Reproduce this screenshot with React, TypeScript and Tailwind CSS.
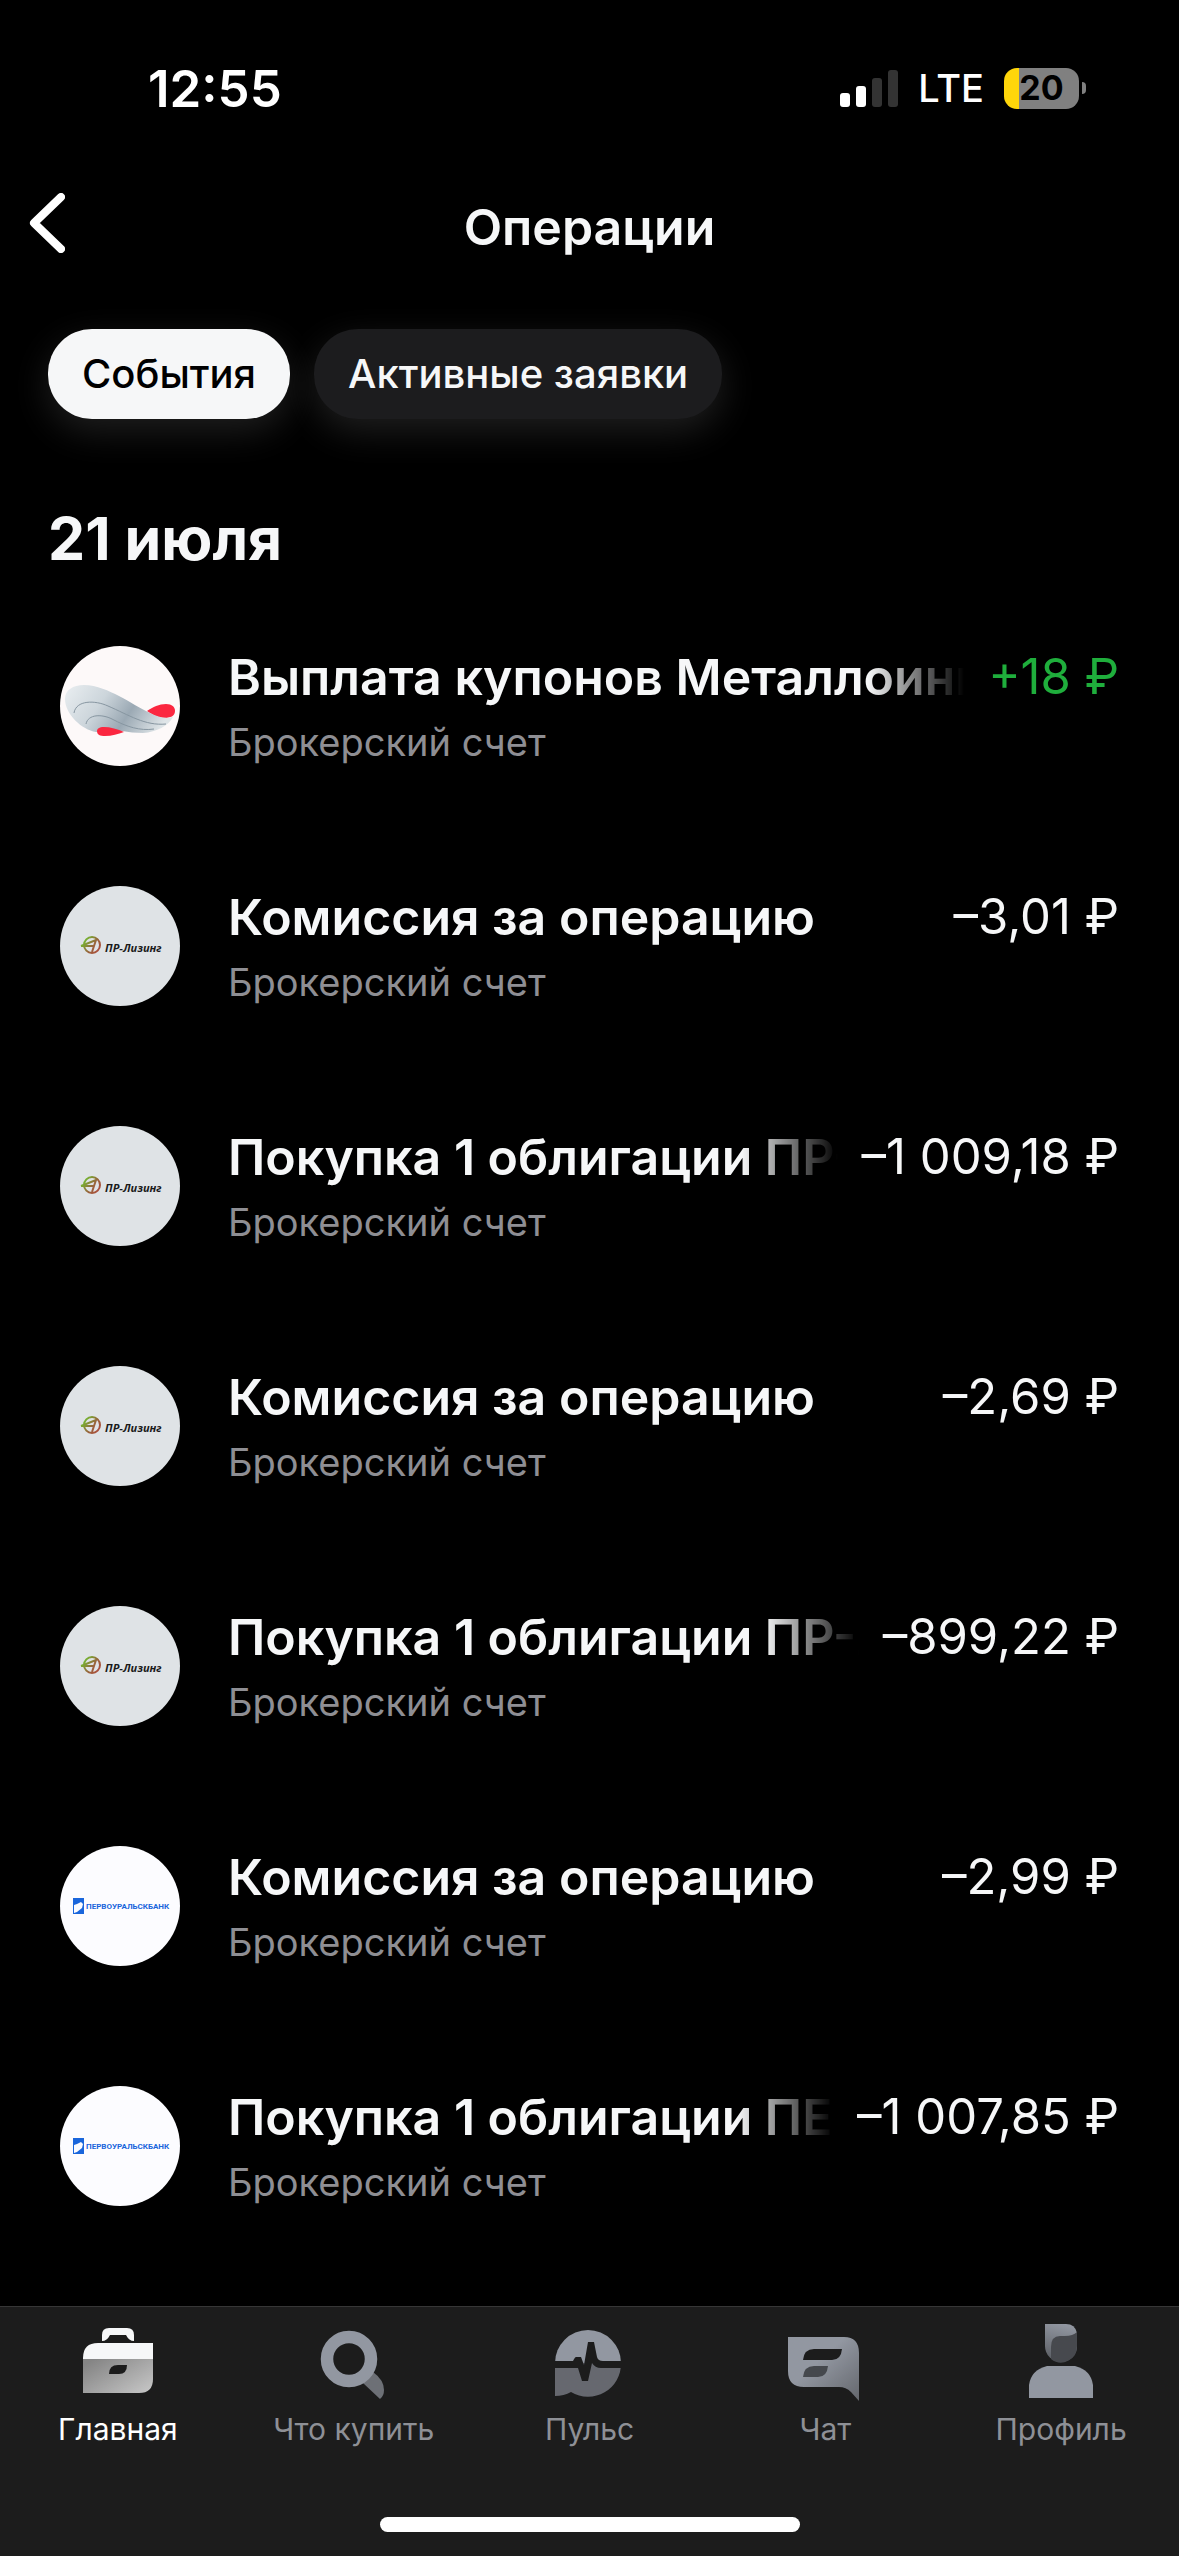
import { useState } from 'react'

type LogoKind = 'metal' | 'leasing' | 'bank'

interface Operation {
  title: string
  amount: string
  logo: LogoKind
  income?: boolean
}

const operations: Operation[] = [
  { title: 'Выплата купонов Металлоинвест', amount: '+18 ₽', logo: 'metal', income: true },
  { title: 'Комиссия за операцию', amount: '–3,01 ₽', logo: 'leasing' },
  { title: 'Покупка 1 облигации ПР-Лизинг', amount: '–1 009,18 ₽', logo: 'leasing' },
  { title: 'Комиссия за операцию', amount: '–2,69 ₽', logo: 'leasing' },
  { title: 'Покупка 1 облигации ПР-Лизинг', amount: '–899,22 ₽', logo: 'leasing' },
  { title: 'Комиссия за операцию', amount: '–2,99 ₽', logo: 'bank' },
  { title: 'Покупка 1 облигации ПЕРВОУРАЛЬСКБАНК', amount: '–1 007,85 ₽', logo: 'bank' },
]

export default function App() {
  return (
    <div className="flex min-h-screen flex-col bg-black font-['Inter',sans-serif] text-[#f6f7f8]">
      <StatusBar />
      <Header />
      <Filters />
      <main className="flex-1">
        <h2 className="px-12 pt-20 text-[59px] leading-20 font-bold">21 июля</h2>
        <ul className="pt-[67px]">
          {operations.map((operation, index) => (
            <OperationRow key={index} operation={operation} />
          ))}
        </ul>
      </main>
      <TabBar />
    </div>
  )
}

function StatusBar() {
  return (
    <div className="flex h-44 items-center justify-between pr-[93px] pl-[148px] text-white">
      <span className="text-[51px] leading-none font-semibold">12:55</span>
      <div className="flex items-center gap-5">
        <svg className="h-[37px] w-[58px]" viewBox="0 0 58 37">
          <rect x="0" y="23" width="10" height="14" rx="3" fill="#fff" />
          <rect x="16" y="16" width="10" height="21" rx="3" fill="#fff" />
          <rect x="32" y="8" width="10" height="29" rx="3" fill="#333" />
          <rect x="48" y="0" width="10" height="37" rx="3" fill="#333" />
        </svg>
        <span className="text-[38px] leading-none font-medium">LTE</span>
        <div className="flex items-center gap-[3px]">
          <div className="flex h-[41px] w-[75px] items-center justify-center rounded-[13px] bg-linear-to-r from-[#ffd60a] from-20% to-[#808080] to-20% text-[34px] leading-none font-bold text-black">
            20
          </div>
          <div className="h-3 w-1 rounded-r-full bg-[#808080]" />
        </div>
      </div>
    </div>
  )
}

function Header() {
  return (
    <header className="grid h-[102px] grid-cols-[1fr_auto_1fr] items-center px-[29px]">
      <button type="button" aria-label="Назад" className="w-9 pb-2">
        <svg className="h-[60px] w-9" viewBox="0 0 36 60" fill="none" stroke="#fff" strokeWidth="8" strokeLinecap="round" strokeLinejoin="round">
          <path d="M32 4 5 30l27 26" />
        </svg>
      </button>
      <h1 className="text-[50px] leading-none font-semibold">Операции</h1>
    </header>
  )
}

function Filters() {
  const [active, setActive] = useState('События')

  return (
    <div className="flex gap-6 px-12 pt-[51px]">
      {['События', 'Активные заявки'].map((name) => (
        <button
          key={name}
          type="button"
          aria-pressed={active === name}
          onClick={() => setActive(name)}
          className={
            active === name
              ? 'h-[90px] rounded-[44px] bg-[#f6f7f8] px-[34px] text-[40px] font-medium text-black shadow-[0_12px_36px_#ffffff1f]'
              : 'h-[90px] rounded-[44px] bg-[#1c1c1e] px-[34px] text-[40px] font-medium shadow-[0_12px_36px_#ffffff1f]'
          }
        >
          {name}
        </button>
      ))}
    </div>
  )
}

function OperationRow({ operation }: { operation: Operation }) {
  return (
    <li className="flex h-60 items-start gap-12 px-15 last:h-auto">
      <Logo kind={operation.logo} />
      <div className="min-w-0 flex-1">
        <div className="flex items-center gap-6 leading-[62px]">
          <span className="min-w-0 flex-1 overflow-hidden mask-r-from-[calc(100%-96px)] text-[50px] font-semibold whitespace-nowrap">
            {operation.title}
          </span>
          <span
            className={
              operation.income ? 'text-[49px] whitespace-nowrap text-[#1fae3c]' : 'text-[49px] whitespace-nowrap'
            }
          >
            {operation.amount}
          </span>
        </div>
        <p className="pt-[10px] text-[38px] leading-12 text-[#8e8e93]">Брокерский счет</p>
      </div>
    </li>
  )
}

function Logo({ kind }: { kind: LogoKind }) {
  if (kind === 'metal') {
    return (
      <svg className="size-30 shrink-0" viewBox="0 0 120 120">
        <defs>
          <linearGradient id="metal" x1="0" y1="0.2" x2="1" y2="0.5">
            <stop offset="0" stopColor="#e6ebee" />
            <stop offset="0.35" stopColor="#ccd5db" />
            <stop offset="0.65" stopColor="#9ba9b4" />
            <stop offset="1" stopColor="#dfe5e8" />
          </linearGradient>
        </defs>
        <circle cx="60" cy="60" r="60" fill="#fdf9f9" />
        <path d="M87 65c6-4 12-7 19-7 6 0 9 3 9 7 0 5-5 7-10 7-7 0-12-3-18-7z" fill="#fb2740" />
        <path d="M5 53c0-9 8-14 19-14 13 0 25 6 35 11 12 6 20 12 31 17 8 4 15 6 23 4-5 9-16 15-30 16-8 0-14-1-21-2l-26 1C22 84 5 68 5 53z" fill="url(#metal)" />
        <path d="M14 67c2-13 21-13 34-7 21 9 37 20 58 18M26 78c2-10 16-10 26-5 15 8 28 12 42 10" fill="none" stroke="#8796a1" />
        <path d="M64 86c-6-3-14-5-20-5-5 0-7 2-7 4 0 4 3 5 8 5 7 0 13-2 19-4z" fill="#fb2740" />
      </svg>
    )
  }

  if (kind === 'leasing') {
    return (
      <svg className="size-30 shrink-0" viewBox="0 0 120 120">
        <defs>
          <linearGradient id="leasing" gradientUnits="userSpaceOnUse" x1="22" y1="55" x2="40" y2="69">
            <stop offset="0" stopColor="#6fc230" />
            <stop offset="0.5" stopColor="#98653c" />
            <stop offset="1" stopColor="#b5443c" />
          </linearGradient>
        </defs>
        <circle cx="60" cy="60" r="60" fill="#dfe3e6" />
        <circle cx="32" cy="59" r="8" fill="none" stroke="url(#leasing)" strokeWidth="2" />
        <path d="m21 60 15-6-4 12M21 60h13" fill="none" stroke="url(#leasing)" strokeWidth="2" />
        <text x="45" y="66" fill="#1a1a1a" fontFamily="Open Sans" fontSize="11" fontStyle="italic" fontWeight="700">
          ПР-Лизинг
        </text>
      </svg>
    )
  }

  return (
    <svg className="size-30 shrink-0" viewBox="0 0 120 120">
      <circle cx="60" cy="60" r="60" fill="#fcfcff" />
      <rect x="13" y="52" width="11" height="16" fill="#1a66dc" />
      <path d="m14 59 3-1 4-2 2 2-1 4-5 4-3 1z" fill="#fcfcff" />
      <text x="26" y="63" fill="#1a66dc" fontFamily="Liberation Sans Narrow, Roboto" fontSize="8" fontWeight="700">
        ПЕРВОУРАЛЬСКБАНК
      </text>
    </svg>
  )
}

const tabs = [
  { name: 'Главная', icon: <BriefcaseIcon /> },
  { name: 'Что купить', icon: <SearchIcon /> },
  { name: 'Пульс', icon: <PulseIcon /> },
  { name: 'Чат', icon: <ChatIcon /> },
  { name: 'Профиль', icon: <ProfileIcon /> },
]

function TabBar() {
  return (
    <footer className="border-t border-[#363636] bg-[#1c1c1c] pt-3">
      <nav className="grid grid-cols-5">
        {tabs.map((tab, index) => (
          <a
            key={tab.name}
            href="#"
            className={
              index === 0
                ? 'flex flex-col items-center gap-2 text-[30px] leading-9 text-white'
                : 'flex flex-col items-center gap-2 text-[30px] leading-9 text-[#8e9096]'
            }
          >
            {tab.icon}
            {tab.name}
          </a>
        ))}
      </nav>
      <div className="mx-auto mt-[70px] mb-6 h-[15px] w-[420px] rounded-full bg-white" />
    </footer>
  )
}

function BriefcaseIcon() {
  return (
    <svg className="size-[84px]" viewBox="0 0 84 84">
      <defs>
        <linearGradient id="case" x1="0" y1="0.2" x2="1" y2="1">
          <stop offset="0" stopColor="#858585" />
          <stop offset="1" stopColor="#c8c8c8" />
        </linearGradient>
      </defs>
      <path d="M26 22v-6q0-7 7-7h18q7 0 7 7v6q-5 0-8-6H34q-3 6-8 6z" fill="#f6f7f8" />
      <path d="M7 41V39q0-15 15-15h55v17z" fill="#f6f7f8" />
      <path d="M7 40h70v20q0 14-14 14H7z" fill="url(#case)" />
      <path d="M33 55q0-9 9-9h9q0 9-8 9z" fill="#1c1c1c" />
    </svg>
  )
}

function SearchIcon() {
  return (
    <svg className="size-[84px]" viewBox="0 0 84 84">
      <path d="m51 64 10-11q11 8 11 18 0 6-4 9z" fill="#6d7076" />
      <circle cx="37" cy="40" r="22" fill="none" stroke="#9297a1" strokeWidth="12.5" />
    </svg>
  )
}

function PulseIcon() {
  return (
    <svg className="size-[84px]" viewBox="0 0 84 84">
      <path d="M8 44a33 33 0 0 1 66 0z" fill="#9297a1" />
      <path d="M8 44h66a33 33 0 0 1-50 29q-7 4-16 4z" fill="#66686f" />
      <path d="M7 42h19q2-4 3-4h5l3 8 4-23h6l3 15q1 4 6 4h20v7H54q-6 0-9-5l-4 18h-6l-4-13H7z" fill="#1c1c1c" />
    </svg>
  )
}

function ChatIcon() {
  return (
    <svg className="size-[84px]" viewBox="0 0 84 84">
      <defs>
        <linearGradient id="chat" x1="0.4" y1="0.4" x2="1" y2="1">
          <stop offset="0" stopColor="#9297a1" />
          <stop offset="1" stopColor="#64676d" />
        </linearGradient>
      </defs>
      <path d="M5 18h56q15 0 15 16v48l-8-9q-5-5-12-5H21Q5 68 5 52z" fill="url(#chat)" />
      <path d="M20 41q1-11 11-11h28q-1 11-10 11z" fill="#1c1c1c" />
      <path d="M20 58q1-11 11-11h14q-1 11-10 11z" fill="#45484d" />
    </svg>
  )
}

function ProfileIcon() {
  return (
    <svg className="size-[84px]" viewBox="0 0 84 84">
      <defs>
        <linearGradient id="head" x1="0.6" y1="0" x2="0.4" y2="1">
          <stop offset="0" stopColor="#9297a1" />
          <stop offset="1" stopColor="#5b5e64" />
        </linearGradient>
      </defs>
      <path d="M26 5h21q9 0 11 9v13a16 16 0 0 1-32 0z" fill="url(#head)" />
      <path d="M32 40V28q0-11 9-11h5q8 0 12-4v14a16 16 0 0 1-26 13z" fill="#47494e" />
      <path d="M10 79V66q2-15 18-19h28q16 4 18 19v13z" fill="#9297a1" />
    </svg>
  )
}
